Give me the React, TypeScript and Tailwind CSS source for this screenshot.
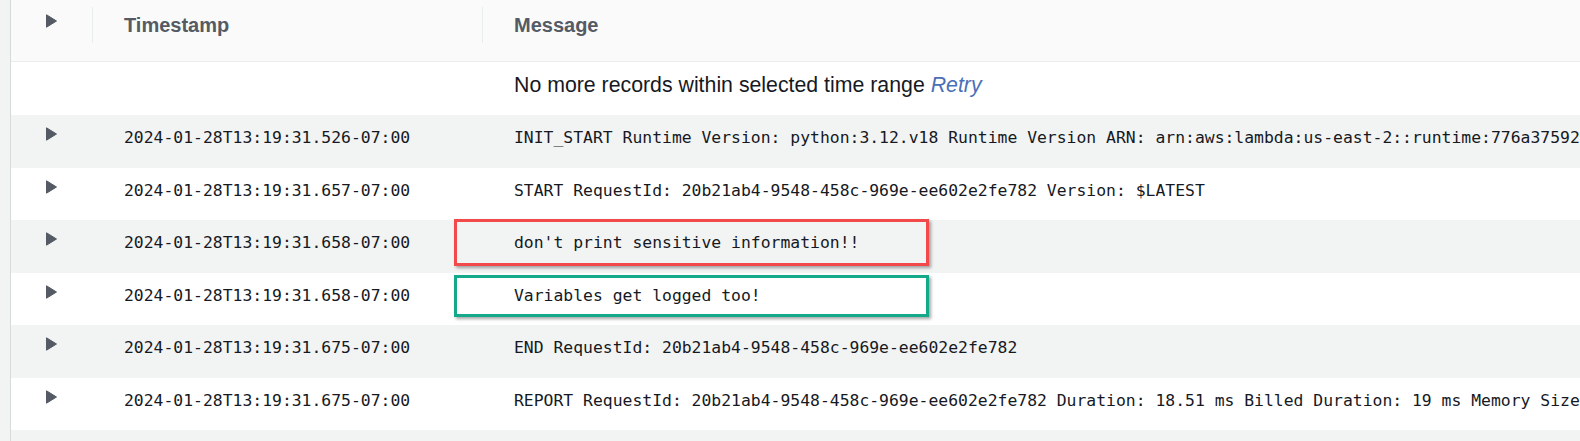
import React from 'react';

type Row = { ts: string; msg: string };

// messages are cut where the log viewer's pane ends
const rows: Row[] = [
  {
    ts: '2024-01-28T13:19:31.526-07:00',
    msg: 'INIT_START Runtime Version: python:3.12.v18 Runtime Version ARN: arn:aws:lambda:us-east-2::runtime:776a37592',
  },
  {
    ts: '2024-01-28T13:19:31.657-07:00',
    msg: 'START RequestId: 20b21ab4-9548-458c-969e-ee602e2fe782 Version: $LATEST',
  },
  {
    ts: '2024-01-28T13:19:31.658-07:00',
    msg: "don't print sensitive information!!",
  },
  {
    ts: '2024-01-28T13:19:31.658-07:00',
    msg: 'Variables get logged too!',
  },
  {
    ts: '2024-01-28T13:19:31.675-07:00',
    msg: 'END RequestId: 20b21ab4-9548-458c-969e-ee602e2fe782',
  },
  {
    ts: '2024-01-28T13:19:31.675-07:00',
    msg: 'REPORT RequestId: 20b21ab4-9548-458c-969e-ee602e2fe782 Duration: 18.51 ms Billed Duration: 19 ms Memory Size',
  },
];

function Caret() {
  return (
    <svg width="11" height="14" viewBox="0 0 11 14" className="block">
      <path d="M0.5 0.8 L10.5 7 L0.5 13.2 Z" fill="#545b64" stroke="#545b64" strokeWidth="1" strokeLinejoin="round" />
    </svg>
  );
}

export default function App() {
  return (
    <div className="relative w-[1580px] h-[441px] overflow-hidden flex bg-[#f2f3f3]">
      {/* left gutter */}
      <div className="w-[10px] shrink-0 bg-[#f2f3f3]" />

      <div className="flex-1 min-w-0 border-l border-[#d5dbdb] bg-white overflow-hidden">
        {/* header */}
        <div className="h-[62px] bg-[#fafafa] border-b border-[#eaeded] grid grid-cols-[81px_390px_1fr] items-start pt-[7px] font-['Liberation_Sans',Arial,sans-serif] font-bold text-[20px] leading-[24px] text-[#545b64]">
          <div className="h-[36px] flex justify-center pt-[7px]">
            <Caret />
          </div>
          <div className="h-[36px] border-l border-[#eaeded] pl-[31px] flex items-center">Timestamp</div>
          <div className="h-[36px] border-l border-[#eaeded] pl-[31px] flex items-center">Message</div>
        </div>

        {/* no more records */}
        <div className="h-[53px] bg-white grid grid-cols-[81px_390px_1fr] pt-[11px]">
          <div />
          <div />
          <div className="pl-[32px] font-['Liberation_Sans',Arial,sans-serif] text-[21.3px] leading-[24px] text-[#16191f] whitespace-nowrap">
            No more records within selected time range <span className="italic text-[#4a6fb8]">Retry</span>
          </div>
        </div>

        {/* log rows */}
        {rows.map((r, i) => (
          <div
            key={i}
            className={`h-[52.5px] grid grid-cols-[81px_390px_1fr] ${i % 2 === 0 ? 'bg-[#f2f3f3]' : 'bg-white'}`}
          >
            <div className="flex justify-center pt-[12px]">
              <Caret />
            </div>
            <div className="pl-[32px] pt-[13px] font-['DejaVu_Sans_Mono',monospace] text-[16.4px] leading-[20px] text-[#16191f] whitespace-nowrap">
              {r.ts}
            </div>
            <div className="pl-[32px] pt-[13px] font-['DejaVu_Sans_Mono',monospace] text-[16.4px] leading-[20px] text-[#16191f] whitespace-nowrap">
              {r.msg}
            </div>
          </div>
        ))}
        <div className="h-[52.5px] bg-[#f2f3f3]" />
      </div>

      {/* annotation boxes */}
      <div className="absolute left-[454px] top-[219px] w-[475px] h-[47px] border-[3px] border-[#f24a4a] shadow-[2px_2px_3px_rgba(0,0,0,0.35)]" />
      <div className="absolute left-[454px] top-[275px] w-[475px] h-[42px] border-[3px] border-[#14a98a] shadow-[2px_2px_3px_rgba(0,0,0,0.35)]" />
    </div>
  );
}
